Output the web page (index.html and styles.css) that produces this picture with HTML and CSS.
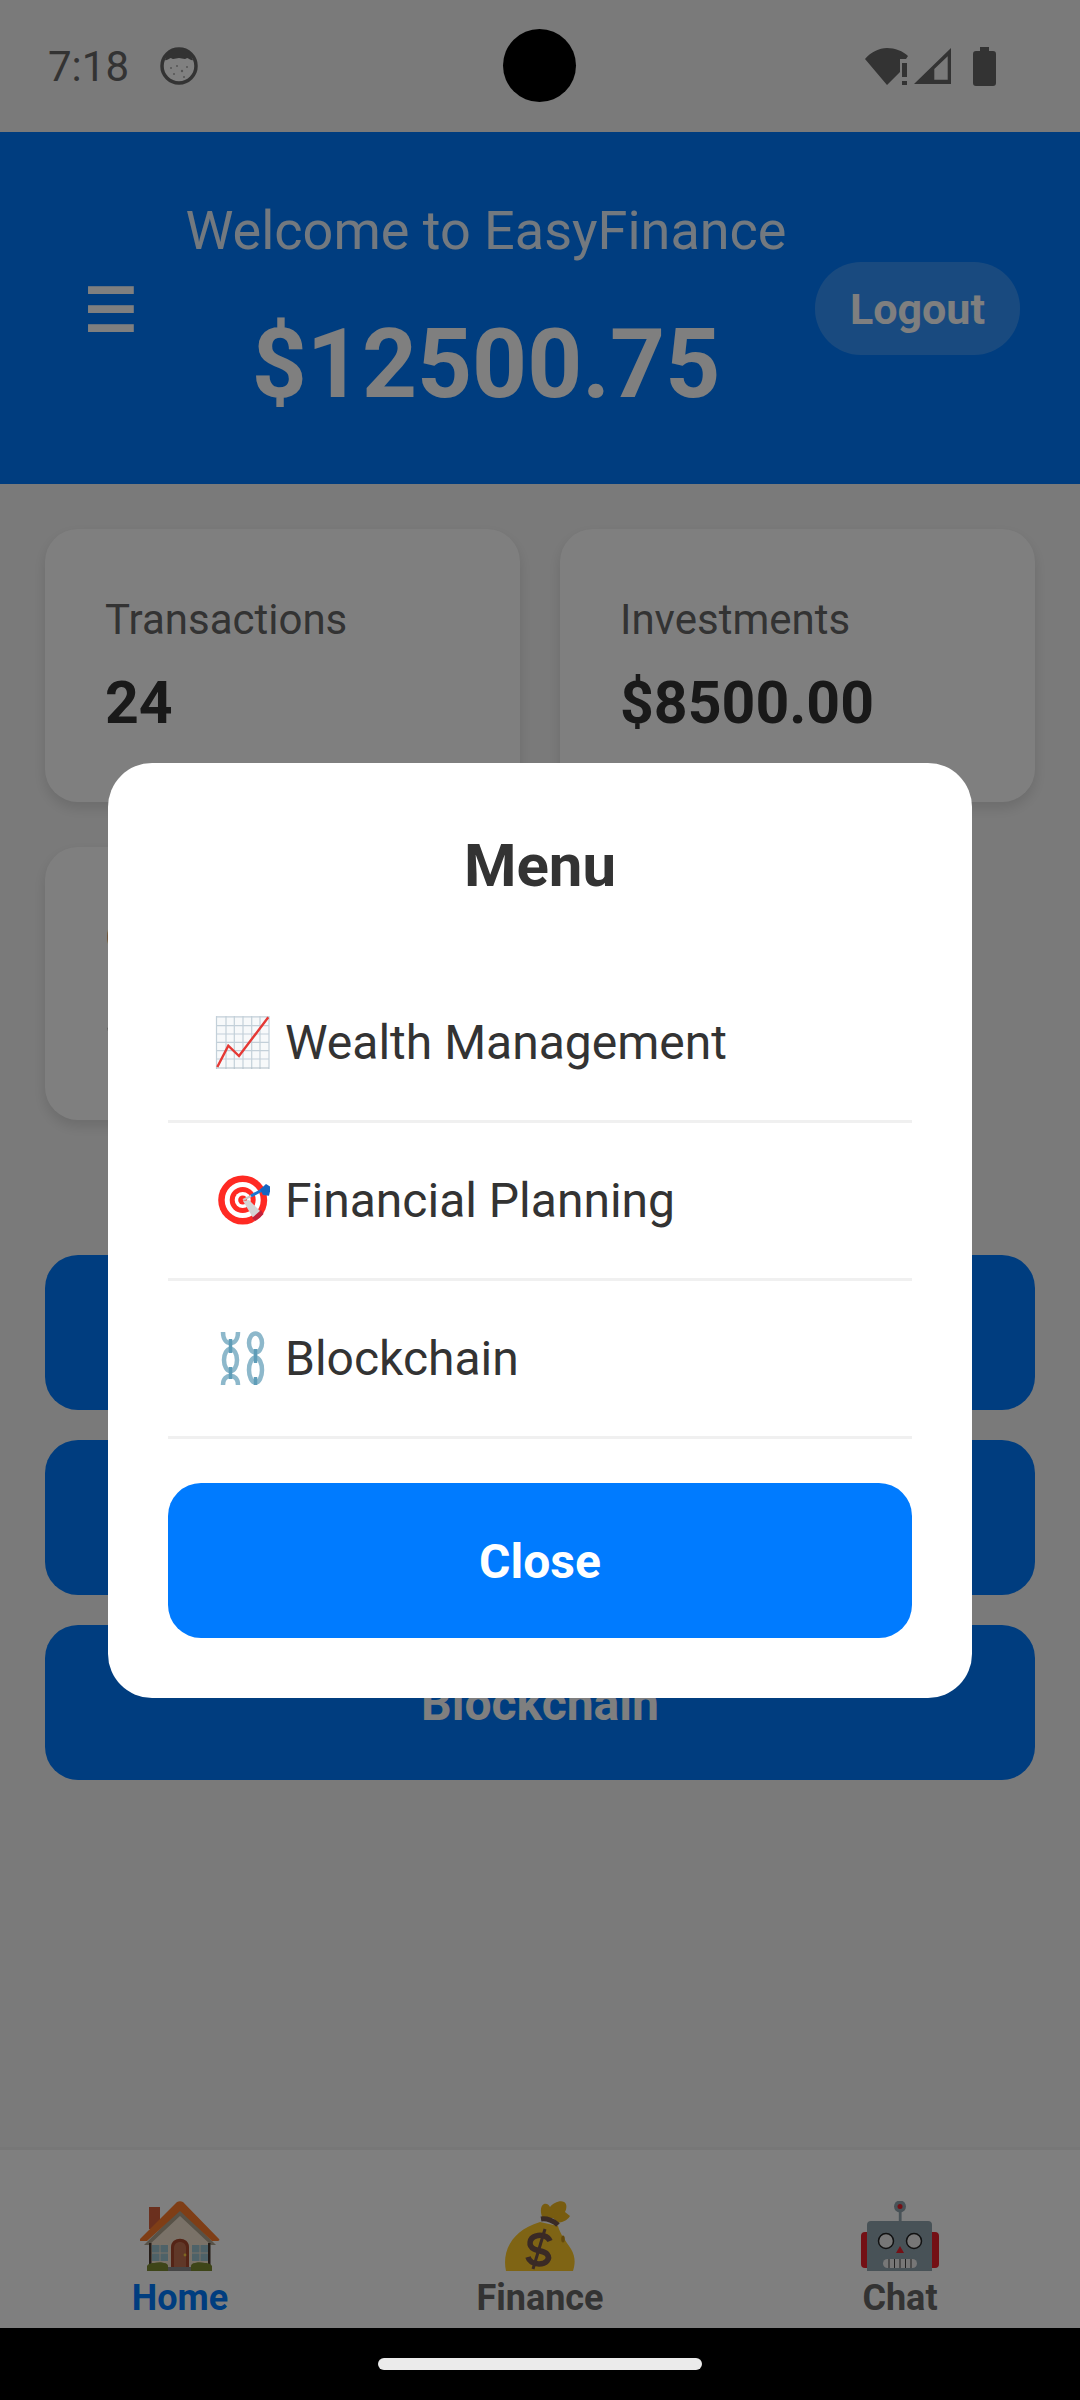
FILE: index.html
```html
<!DOCTYPE html>
<html>
    <head>
        <title>EasyFinance</title>
        <meta name="viewport" content="width=device-width, initial-scale=1.0">
        <link rel="stylesheet" href="styles.css">
    </head>
    <body>
        <div class="phone">
            <div class="status-bar">
                <div class="status-left">
                    <span class="clock">7:18</span>
                    <svg class="status-app" viewBox="0 0 38 38">
                        <circle cx="19" cy="19" r="17" fill="#808080" stroke="#333" stroke-width="3.5"/>
                        <path d="M5 13C8 4 14 1 19 1c5 0 11 3 14 12-2 1-5-2-6-2-2 2-5 0-8 0s-6 2-8 0c-1 0-4 3-6 2z" fill="#333"/>
                        <g fill="#555">
                            <circle cx="11" cy="21" r="1"/>
                            <circle cx="17" cy="19" r="1"/>
                            <circle cx="22" cy="24" r="1.2"/>
                            <circle cx="27" cy="20" r="1"/>
                            <circle cx="14" cy="27" r="1"/>
                            <circle cx="24" cy="30" r="1"/>
                        </g>
                    </svg>
                </div>
                <div class="camera"></div>
                <div class="status-right">
                    <svg class="status-wifi" viewBox="0 0 43 37">
                        <path d="M0 11C6 4 14 0 22 0c8 0 16 3 21 8l-2 3h-6v13L22 37z" fill="#333"/>
                        <rect x="37" y="15" width="5" height="14" fill="#333"/>
                        <rect x="37" y="33" width="5" height="4" fill="#333"/>
                    </svg>
                    <svg class="status-signal" viewBox="0 0 37 36">
                        <path d="M37 0v36H0zM33.7 8.3 20.3 21v10.7h13.4z" fill="#333" fill-rule="evenodd"/>
                    </svg>
                    <svg class="status-battery" viewBox="0 0 23 39">
                        <path d="M7 0h9v4h4a3 3 0 0 1 3 3v29a3 3 0 0 1-3 3H3a3 3 0 0 1-3-3V7a3 3 0 0 1 3-3h4z" fill="#333"/>
                    </svg>
                </div>
            </div>

            <div class="screen">
                <header class="header">
                    <button class="menu-btn">☰</button>
                    <div class="balance">
                        <p class="welcome">Welcome to EasyFinance</p>
                        <p class="amount">$12500.75</p>
                    </div>
                    <button class="logout-btn">Logout</button>
                </header>

                <main class="content">
                    <div class="stats">
                        <div class="stat-card">
                            <p class="stat-label">Transactions</p>
                            <p class="stat-value">24</p>
                        </div>
                        <div class="stat-card">
                            <p class="stat-label">Investments</p>
                            <p class="stat-value">$8500.00</p>
                        </div>
                        <div class="stat-card">
                            <p class="stat-label">Goals</p>
                            <p class="stat-value">$4000.75</p>
                        </div>
                    </div>
                    <div class="actions">
                        <button class="action-btn">Wealth Management</button>
                        <button class="action-btn">Financial Planning</button>
                        <button class="action-btn">Blockchain</button>
                    </div>
                </main>

                <nav class="tab-bar">
                    <div class="tab tab-active">
                        <svg class="tab-icon" viewBox="0 0 80 70">
                            <path d="M9 6h11v22H9z" fill="#d6603c"/>
                            <path d="M40 10 70 40v26H9V40z" fill="#f4e4d0"/>
                            <path d="M40 8 4 44h5l31-29 31 29h5z" fill="#b0a48e"/>
                            <path d="M37 1c2-1 4-1 6 0l36 37c1 1 0 2-1 2h-6L40 10 7 40H1c-1 0-2-1-1-2z" fill="#ff7c2c"/>
                            <rect x="9" y="42" width="2.5" height="22" fill="#4a3a30"/>
                            <rect x="68" y="42" width="2.5" height="22" fill="#4a3a30"/>
                            <path d="M31 66V46c0-11 18-11 18 0v20z" fill="#a8482c"/>
                            <path d="M34 66V47c0-8 12-8 12 0v19z" fill="#c07050"/>
                            <circle cx="45" cy="54" r="1.4" fill="#ffd040"/>
                            <path d="M12 44h7.500v7.500H12zM20.500 44H28v7.500h-7.500zM12 52.500h7.500V60H12zM20.500 52.500H28V60h-7.500zM52 44h7.500v7.500H52zM60.500 44H68v7.500h-7.500zM52 52.500h7.500V60H52zM60.500 52.500H68V60h-7.500z" fill="#9cc4d0"/>
                            <rect x="25" y="66" width="30" height="4" fill="#8a8a8a"/>
                            <path d="M7 70v-5c2-3 5-3 7-3 4-1 8-1 10 0 3 0 4 2 4 3v5z" fill="#7c8a30"/>
                            <path d="M51 70v-5c0-1 1-3 4-3 2-1 6-1 10 0 2 0 5 0 7 3v5z" fill="#7c8a30"/>
                        </svg>
                        <span class="tab-label">Home</span>
                    </div>
                    <div class="tab">
                        <svg class="tab-icon" viewBox="0 0 80 70">
                            <path d="M43 18c-3-6-3-13 1-15 3-1 5 1 6 3 3-4 10-7 14-5 4 2 2 8 1 10l5 4c-3 5-8 6-12 7l-5-5-5 1z" fill="#f0b820"/>
                            <path d="M6 70C2 52 10 30 40 21l18 4c2 8 8 15 13 23 5 8 4 16 2 22z" fill="#ffc928"/>
                            <path d="M41 18c6-1 13 2 17 6" fill="none" stroke="#74544a" stroke-width="5"/>
                            <ellipse cx="63" cy="38" rx="1.800" ry="3.500" fill="#c89418"/>
                            <path d="M50 40c-2-5-9-7-14-5-7 2-8 10-2 13 4 2 10 2 13 5 4 5-1 10-8 10-6 0-10-3-11-7" fill="none" stroke="#74544a" stroke-width="5.500"/>
                            <path d="M45 28 33 68" fill="none" stroke="#74544a" stroke-width="3"/>
                        </svg>
                        <span class="tab-label">Finance</span>
                    </div>
                    <div class="tab">
                        <svg class="tab-icon" viewBox="0 0 80 70">
                            <path d="M38.800 8h2.800v14h-2.800z" fill="#90a4ae"/>
                            <circle cx="40" cy="5.500" r="6" fill="#90a4ae"/>
                            <circle cx="40" cy="5.500" r="2.500" fill="#e8202a"/>
                            <path d="M5 31h6v36H5a4 4 0 0 1-4-4V35a4 4 0 0 1 4-4zM69 31h6a4 4 0 0 1 4 4v28a4 4 0 0 1-4 4h-6z" fill="#e8202a"/>
                            <path d="M11 20h57a4 4 0 0 1 4 4v46H7V24a4 4 0 0 1 4-4z" fill="#90a4ae"/>
                            <circle cx="26" cy="40" r="7.500" fill="#eee" stroke="#222" stroke-width="1.500"/>
                            <circle cx="54" cy="40" r="7.500" fill="#eee" stroke="#222" stroke-width="1.500"/>
                            <path d="M40 45l4 7h-8z" fill="#e8202a"/>
                            <rect x="23" y="58" width="34" height="9" rx="4.500" fill="#eee"/>
                            <path d="M29 58v9M34.500 58v9M40 58v9M45.500 58v9M51 58v9" stroke="#444" stroke-width="1"/>
                        </svg>
                        <span class="tab-label">Chat</span>
                    </div>
                </nav>

                <div class="overlay">
                    <div class="modal">
                        <h2 class="modal-title">Menu</h2>
                        <ul class="menu-list">
                            <li class="menu-item">
                                <svg class="menu-icon" viewBox="0 0 56 56">
                                    <rect x="2" y="2.300" width="53.300" height="52" fill="#f7f9fa"/>
                                    <path d="M2.500 2v53M12 2v53M20.300 2v53M29 2v53M37.700 2v53M46 2v53M55 2v53M2 2.800h53M2 11.700h53M2 20h53M2 28.300h53M2 36.700h53M2 45h53" stroke="#c3d0d9" stroke-width="1.200"/>
                                    <path d="M2 54h53" stroke="#b0bec5" stroke-width="1.200"/>
                                    <path d="M3.300 53 14.300 31.700 25 42 54.300 3.300" fill="none" stroke="#e53935" stroke-width="2.400"/>
                                </svg>
                                <span>Wealth Management</span>
                            </li>
                            <li class="menu-item">
                                <svg class="menu-icon" viewBox="0 0 56 56">
                                    <circle cx="28.700" cy="28" r="24.500" fill="#ff2a23"/>
                                    <circle cx="28.700" cy="28" r="18" fill="#fff"/>
                                    <circle cx="28.700" cy="28" r="13" fill="#ff2a23"/>
                                    <circle cx="28.700" cy="28" r="8" fill="#fff"/>
                                    <circle cx="28.700" cy="28" r="4.500" fill="#ff2a23"/>
                                    <path d="M29 29l6-1 14 14a24.500 24.500 0 0 1-8 7z" fill="#d4d4d4"/>
                                    <path d="M38 46l9-8 2.500 4a24.500 24.500 0 0 1-8.500 7z" fill="#c2223a"/>
                                    <path d="M29 28 38 23.500" stroke="#c9c9c9" stroke-width="2"/>
                                    <path d="M37 24 50 17" stroke="#1976d2" stroke-width="3"/>
                                    <path d="M46 17.500 52 12l5 3-2 8.700-6-.7z" fill="#1565c0"/>
                                </svg>
                                <span>Financial Planning</span>
                            </li>
                            <li class="menu-item">
                                <svg class="menu-icon" viewBox="0 0 56 56">
                                    <g fill="none" stroke="#8db8cb" stroke-width="4.500">
                                        <path d="M9 2c0 8 4 11 7.500 11S24 10 24 2"/>
                                        <ellipse cx="16.500" cy="30" rx="6.500" ry="11"/>
                                        <path d="M9 55c0-7 4-9 7.500-9s7.500 2 7.500 9"/>
                                        <ellipse cx="41.500" cy="13" rx="6.500" ry="9.500"/>
                                        <ellipse cx="41.500" cy="40" rx="6.500" ry="12.500"/>
                                    </g>
                                    <path d="M16.500 9v14M16.500 37v12M41.500 19v14M41.500 47v8" fill="none" stroke="#5f9db8" stroke-width="3.500"/>
                                </svg>
                                <span>Blockchain</span>
                            </li>
                        </ul>
                        <button class="close-btn">Close</button>
                    </div>
                </div>
            </div>

            <div class="nav-bar">
                <div class="home-pill"></div>
            </div>
        </div>
    </body>
</html>
```

FILE: styles.css
```css
/* ---- General ---- */
* {
    box-sizing: border-box;
    font-family: Roboto, 'Noto Sans', sans-serif;
}

html, body {
    margin: 0;
    padding: 0;
}

p, h2, ul {
    margin: 0;
    padding: 0;
}

button {
    border: 0;
}

.phone {
    display: flex;
    flex-direction: column;
    height: 2400px;
    overflow: hidden;
    width: 1080px;
}

/* ---- Status Bar ---- */
.status-bar {
    align-items: center;
    background-color: #7a7a7a;
    display: flex;
    flex-shrink: 0;
    height: 132px;
    justify-content: space-between;
    padding: 0 84px 0 48px;
    position: relative;
}

.status-left {
    align-items: center;
    display: flex;
    gap: 31px;
}

.clock {
    color: #333;
    font-size: 42px;
}

.status-app {
    height: 38px;
    width: 38px;
}

.status-right {
    align-items: center;
    display: flex;
}

.status-wifi {
    height: 37px;
    margin-right: 6px;
    width: 43px;
}

.status-signal {
    height: 36px;
    margin-right: 22px;
    width: 37px;
}

.status-battery {
    height: 39px;
    width: 23px;
}

.camera {
    background-color: #000;
    border-radius: 50%;
    height: 73px;
    left: 503px;
    position: absolute;
    top: 29px;
    width: 73px;
}

/* ---- Screen ---- */
.screen {
    background-color: #f5f5f5;
    display: flex;
    flex: 1;
    flex-direction: column;
    position: relative;
}

.header {
    align-items: center;
    background-color: #007bff;
    display: flex;
    flex-shrink: 0;
    height: 352px;
    justify-content: space-between;
    padding: 0 60px 0 84px;
}

.menu-btn {
    background: none;
    color: #fff;
    font-size: 60px;
    font-weight: 700;
    line-height: 1;
    padding: 6px 0 0;
    text-align: left;
    width: 73px;
}

.balance {
    text-align: center;
}

.welcome {
    color: #fff;
    font-size: 54px;
    line-height: 66px;
    margin-bottom: 45px;
    opacity: .9;
}

.amount {
    color: #fff;
    font-size: 96px;
    font-weight: 700;
    line-height: 110px;
}

.logout-btn {
    background-color: rgba(255, 255, 255, .2);
    border-radius: 46px;
    color: #fff;
    font-size: 43px;
    font-weight: 700;
    height: 93px;
    padding: 2px 0 0;
    width: 205px;
}

.content {
    display: flex;
    flex: 1;
    flex-direction: column;
    padding: 45px 45px 0;
}

.stats {
    display: grid;
    gap: 45px 40px;
    grid-template-columns: 1fr 1fr;
}

.stat-card {
    background-color: #fff;
    border-radius: 33px;
    box-shadow: 0 6px 14px rgba(0, 0, 0, .12);
    height: 273px;
    padding: 62px 60px 0;
}

.stat-label {
    color: #666;
    font-size: 42px;
    line-height: 58px;
    margin-bottom: 20px;
}

.stat-value {
    color: #333;
    font-size: 59px;
    font-weight: 700;
    line-height: 68px;
}

.actions {
    display: flex;
    flex-direction: column;
    gap: 30px;
    margin-top: 135px;
}

.action-btn {
    background-color: #007bff;
    border-radius: 33px;
    color: #fff;
    font-size: 48px;
    font-weight: 700;
    height: 155px;
    padding: 2px 0 0;
}

/* ---- Tab Bar ---- */
.tab-bar {
    background-color: #fff;
    border-top: 3px solid #eee;
    display: flex;
    flex-shrink: 0;
    height: 181px;
    padding-top: 51px;
}

.tab {
    align-items: center;
    color: #666;
    display: flex;
    flex: 1;
    flex-direction: column;
}

.tab-icon {
    flex-shrink: 0;
    height: 70px;
    width: 80px;
}

.tab-label {
    font-size: 36px;
    font-weight: 700;
    line-height: 42px;
    margin-top: 6px;
}

.tab-active {
    color: #007bff;
}

/* ---- Menu Modal ---- */
.overlay {
    align-items: center;
    background-color: rgba(0, 0, 0, .5);
    display: flex;
    inset: 0;
    justify-content: center;
    position: absolute;
}

.modal {
    background-color: #fff;
    border-radius: 44px;
    height: 935px;
    padding: 60px;
    width: 864px;
}

.modal-title {
    color: #333;
    font-size: 60px;
    font-weight: 700;
    line-height: 86px;
    margin-bottom: 56px;
    text-align: center;
}

.menu-list {
    list-style: none;
}

.menu-item {
    align-items: center;
    border-bottom: 3px solid #f0f0f0;
    color: #333;
    display: flex;
    font-size: 48px;
    gap: 15px;
    height: 158px;
    padding-left: 46px;
}

.menu-icon {
    flex-shrink: 0;
    height: 56px;
    width: 56px;
}

.close-btn {
    background-color: #007bff;
    border-radius: 33px;
    color: #fff;
    display: block;
    font-size: 48px;
    font-weight: 700;
    height: 155px;
    margin-top: 44px;
    padding: 2px 0 0;
    width: 100%;
}

/* ---- Navigation Bar ---- */
.nav-bar {
    align-items: center;
    background-color: #000;
    display: flex;
    flex-shrink: 0;
    height: 72px;
    justify-content: center;
}

.home-pill {
    background-color: #ebebeb;
    border-radius: 6px;
    height: 12px;
    width: 324px;
}
```
